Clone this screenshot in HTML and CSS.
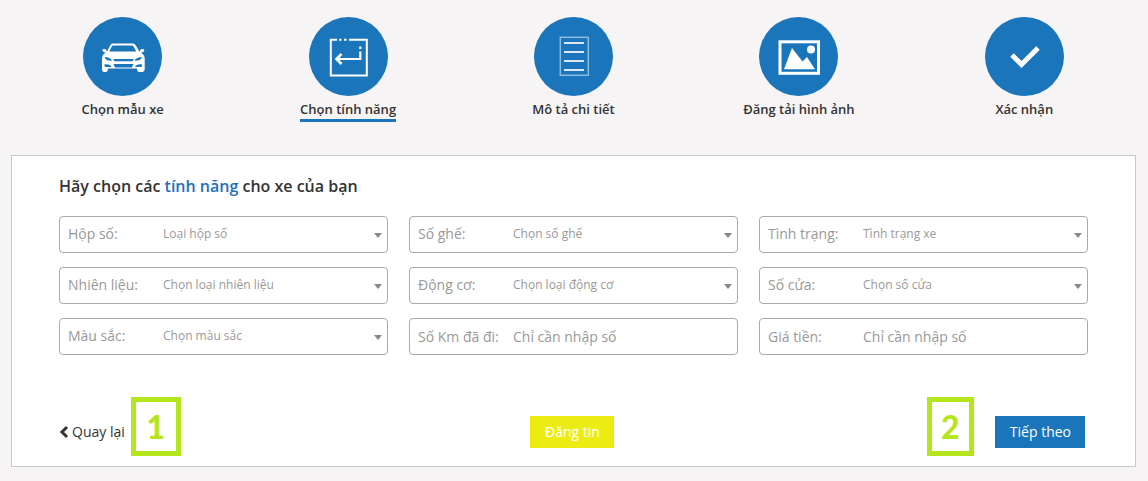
FILE: index.html
```html
<!DOCTYPE html>
<html lang="vi">
<head>
<meta charset="utf-8">
<meta name="viewport" content="width=device-width, initial-scale=1">
<title>Chọn tính năng</title>
<link rel="stylesheet" href="styles.css">
</head>
<body>
<nav>
  <ol class="steps">
    <li class="step">
      <svg class="step-icon" viewBox="0 0 79 79" aria-hidden="true">
        <circle cx="39.500" cy="39.500" r="39.500" fill="#1b75bb"/>
        <g fill="#fff">
          <path d="M30 26.500h19c2 0 3 .6 4 2.200l3.500 6 .8-1.700c.8-1.600 4-1.200 4 .3 0 1.400-1.500 2-3 2.400l2 2c1 1 1.400 2.500 1.400 4.500v9.800c0 2-1 3-3 3h-2.200c-1.700 0-2.500-1-2.500-3.500H25c0 2.500-.8 3.500-2.500 3.500h-1.300c-1.500 0-2.200-1-2.200-3v-10c0-2 .5-3.500 1.500-4.500l2-2c-1.700-.3-3.200-1-3.200-2.300 0-1.400 3.200-1.900 4-.3l.8 1.700 3-6c.8-1.500 1.400-2.100 2.900-2.100z"/>
        </g>
        <g fill="#1b75bb">
          <path d="M30.500 28.500h18.300c.9 0 1.400.4 1.900 1.200l2.600 4.800H26.200l2.500-4.800c.4-.8.900-1.200 1.800-1.200z"/>
          <path d="M21.500 40c3.500 0 6 1.300 7.500 3.700-3.500.3-6.500-.5-7.500-3.700zM59 40c-3.500 0-6 1.300-7.500 3.700 3.500.3 6.500-.5 7.500-3.700z"/>
          <path d="M30 42h21l-1.500 2.200h-18zM30.500 47h20l-1.600 3.500H32z"/>
          <path d="M21.500 47.500c3.500-.5 6 .3 7 2.500-3.500 0-5.700.4-7-.7zM59 47.500c-3.500-.5-6 .3-7 2.500 3.500 0 5.700.4 7-.7z"/>
        </g>
      </svg>
      <a class="step-label" href="#">Chọn mẫu xe</a>
    </li>
    <li class="step">
      <svg class="step-icon" viewBox="0 0 79 79" aria-hidden="true">
        <circle cx="39.500" cy="39.500" r="39.500" fill="#1b75bb"/>
        <path d="M28 22.800h-6.200v35.700h36V22.800H40M30 22.800h2.500M35 22.800h2.500" fill="none" stroke="#fff" stroke-width="2"/>
        <path d="M51.300 29.500v2.500M51.300 34.500v7.500H29" fill="none" stroke="#fff" stroke-width="2.200"/>
        <path d="M32.500 37l-5 5 5 5" fill="none" stroke="#fff" stroke-width="2.600"/>
      </svg>
      <a class="step-label step-label-current" href="#" aria-current="step">Chọn tính năng</a>
    </li>
    <li class="step">
      <svg class="step-icon" viewBox="0 0 79 79" aria-hidden="true">
        <circle cx="39.500" cy="39.500" r="39.500" fill="#1b75bb"/>
        <rect x="26.300" y="20.300" width="28" height="38" fill="none" stroke="#8cbbe0" stroke-width="1.500"/>
        <path d="M30 26h20M30 35h20M30 44h20M30 53h20" stroke="#d9e9f5" stroke-width="2"/>
      </svg>
      <a class="step-label" href="#">Mô tả chi tiết</a>
    </li>
    <li class="step">
      <svg class="step-icon" viewBox="0 0 79 79" aria-hidden="true">
        <circle cx="39.500" cy="39.500" r="39.500" fill="#1b75bb"/>
        <rect x="21" y="24.800" width="38.500" height="31.500" fill="none" stroke="#fff" stroke-width="3"/>
        <path d="M25 52.300l8-21.300L43.500 44.500l4.500-4.500 8 12.300z" fill="#fff"/>
        <circle cx="52" cy="32.500" r="4" fill="#fff"/>
      </svg>
      <a class="step-label" href="#">Đăng tải hình ảnh</a>
    </li>
    <li class="step">
      <svg class="step-icon" viewBox="0 0 79 79" aria-hidden="true">
        <circle cx="39.500" cy="39.500" r="39.500" fill="#1b75bb"/>
        <path d="M27 38l9.500 9.500 16.500-16.500" fill="none" stroke="#fff" stroke-width="5"/>
      </svg>
      <a class="step-label" href="#">Xác nhận</a>
    </li>
  </ol>
</nav>

<main class="panel">
  <h1 class="panel-title">Hãy chọn các <span class="accent">tính năng</span> cho xe của bạn</h1>
  <form>
    <div class="fields">
      <div class="field field-select">
        <label class="field-label" for="gearbox">Hộp số:</label>
        <select class="field-control" id="gearbox"><option>Loại hộp số</option></select>
      </div>
      <div class="field field-select">
        <label class="field-label" for="seats">Số ghế:</label>
        <select class="field-control" id="seats"><option>Chọn số ghế</option></select>
      </div>
      <div class="field field-select">
        <label class="field-label" for="condition">Tình trạng:</label>
        <select class="field-control" id="condition"><option>Tình trạng xe</option></select>
      </div>
      <div class="field field-select">
        <label class="field-label" for="fuel">Nhiên liệu:</label>
        <select class="field-control" id="fuel"><option>Chọn loại nhiên liệu</option></select>
      </div>
      <div class="field field-select">
        <label class="field-label" for="engine">Động cơ:</label>
        <select class="field-control" id="engine"><option>Chọn loại động cơ</option></select>
      </div>
      <div class="field field-select">
        <label class="field-label" for="doors">Số cửa:</label>
        <select class="field-control" id="doors"><option>Chọn số cửa</option></select>
      </div>
      <div class="field field-select">
        <label class="field-label" for="color">Màu sắc:</label>
        <select class="field-control" id="color"><option>Chọn màu sắc</option></select>
      </div>
      <div class="field">
        <label class="field-label" for="mileage">Số Km đã đi:</label>
        <input class="field-control field-input" id="mileage" type="text" inputmode="numeric" placeholder="Chỉ cần nhập số">
      </div>
      <div class="field">
        <label class="field-label" for="price">Giá tiền:</label>
        <input class="field-control field-input" id="price" type="text" inputmode="numeric" placeholder="Chỉ cần nhập số">
      </div>
    </div>
    <div class="actions">
      <div class="action-group">
        <a class="back" href="#">
          <svg class="back-icon" viewBox="0 0 10 14" aria-hidden="true"><path d="M8 2L3 7l5 5" fill="none" stroke="#333" stroke-width="3"/></svg>
          Quay lại
        </a>
        <span class="marker">1</span>
      </div>
      <button class="button button-post" type="submit">Đăng tin</button>
      <div class="action-group action-group-end">
        <span class="marker marker-next">2</span>
        <button class="button button-next" type="button">Tiếp theo</button>
      </div>
    </div>
  </form>
</main>
</body>
</html>
```

FILE: styles.css
```css
* {
  box-sizing: border-box;
}

body {
  margin: 0;
  padding: 17px 12px 14px 11px;
  background: #f6f4f5;
  color: #333;
  font: 14px/20px "Open Sans", "Noto Sans", sans-serif;
}

.steps {
  display: grid;
  grid-template-columns: repeat(5, 1fr);
  margin: 0 -1px 33px;
  padding: 0;
  list-style: none;
}

.step {
  display: flex;
  flex-direction: column;
  align-items: center;
  gap: 3px;
}

.step-icon {
  width: 79px;
  height: 79px;
}

.step-label {
  border-bottom: 3px solid transparent;
  color: #333;
  font-size: 13px;
  font-weight: 600;
  text-decoration: none;
}

.step-label-current {
  border-bottom-color: #1b75bb;
}

.panel {
  padding: 20px 47px 10px;
  border: 1px solid #c8c8c8;
  background: #fff;
}

.panel-title {
  margin: 0 0 20px;
  font-size: 16px;
  font-weight: 600;
  line-height: 20px;
}

.accent {
  color: #1f6fc0;
}

.fields {
  display: grid;
  grid-template-columns: repeat(3, 1fr);
  gap: 14px 21px;
}

.field {
  display: flex;
  height: 37px;
  align-items: center;
  border: 1px solid #a9a9a9;
  border-radius: 4px;
  color: #999;
}

.field-select {
  padding-bottom: 2px;
}

.field-select::after {
  flex: none;
  margin: 4px 5px 0 0;
  border: 4px solid transparent;
  border-top: 5px solid #888;
  border-bottom: 0;
  content: "";
}

.field-label {
  flex: none;
  width: 103px;
  padding-left: 8px;
  white-space: nowrap;
}

.field-control {
  flex: 1;
  min-width: 0;
  height: 33px;
  padding: 0;
  border: 0;
  appearance: none;
  outline: 0;
  background: transparent;
  color: #999;
  font: 12px/20px "Open Sans", "Noto Sans", sans-serif;
}

.field:focus-within {
  border-color: #1b75bb;
}

.field-input {
  font-size: 14px;
}

.field-input::placeholder {
  color: #999;
  opacity: 1;
}

.actions {
  display: grid;
  grid-template-columns: 1fr auto 1fr;
  align-items: center;
  margin-top: 42px;
  padding-right: 3px;
}

.action-group {
  display: flex;
  align-items: center;
  gap: 6px;
}

.action-group-end {
  justify-content: flex-end;
  gap: 21px;
}

.back {
  display: flex;
  align-items: center;
  gap: 3px;
  padding-top: 10px;
  color: #333;
  text-decoration: none;
}

.back-icon {
  width: 10px;
  height: 14px;
}

.marker {
  width: 50px;
  height: 59px;
  border: 5px solid #b5e61d;
  color: #b5e61d;
  font: 900 32px/49px Lato, sans-serif;
  text-align: center;
}

.marker-next {
  width: 47px;
}

.button {
  height: 32px;
  margin-top: 10px;
  padding: 0 14px 0 15px;
  border: 0;
  color: #fff;
  font: 14px/20px "Open Sans", "Noto Sans", sans-serif;
}

.button-post {
  background: #ecec13;
}

.button-next {
  background: #1b75bb;
}
```
